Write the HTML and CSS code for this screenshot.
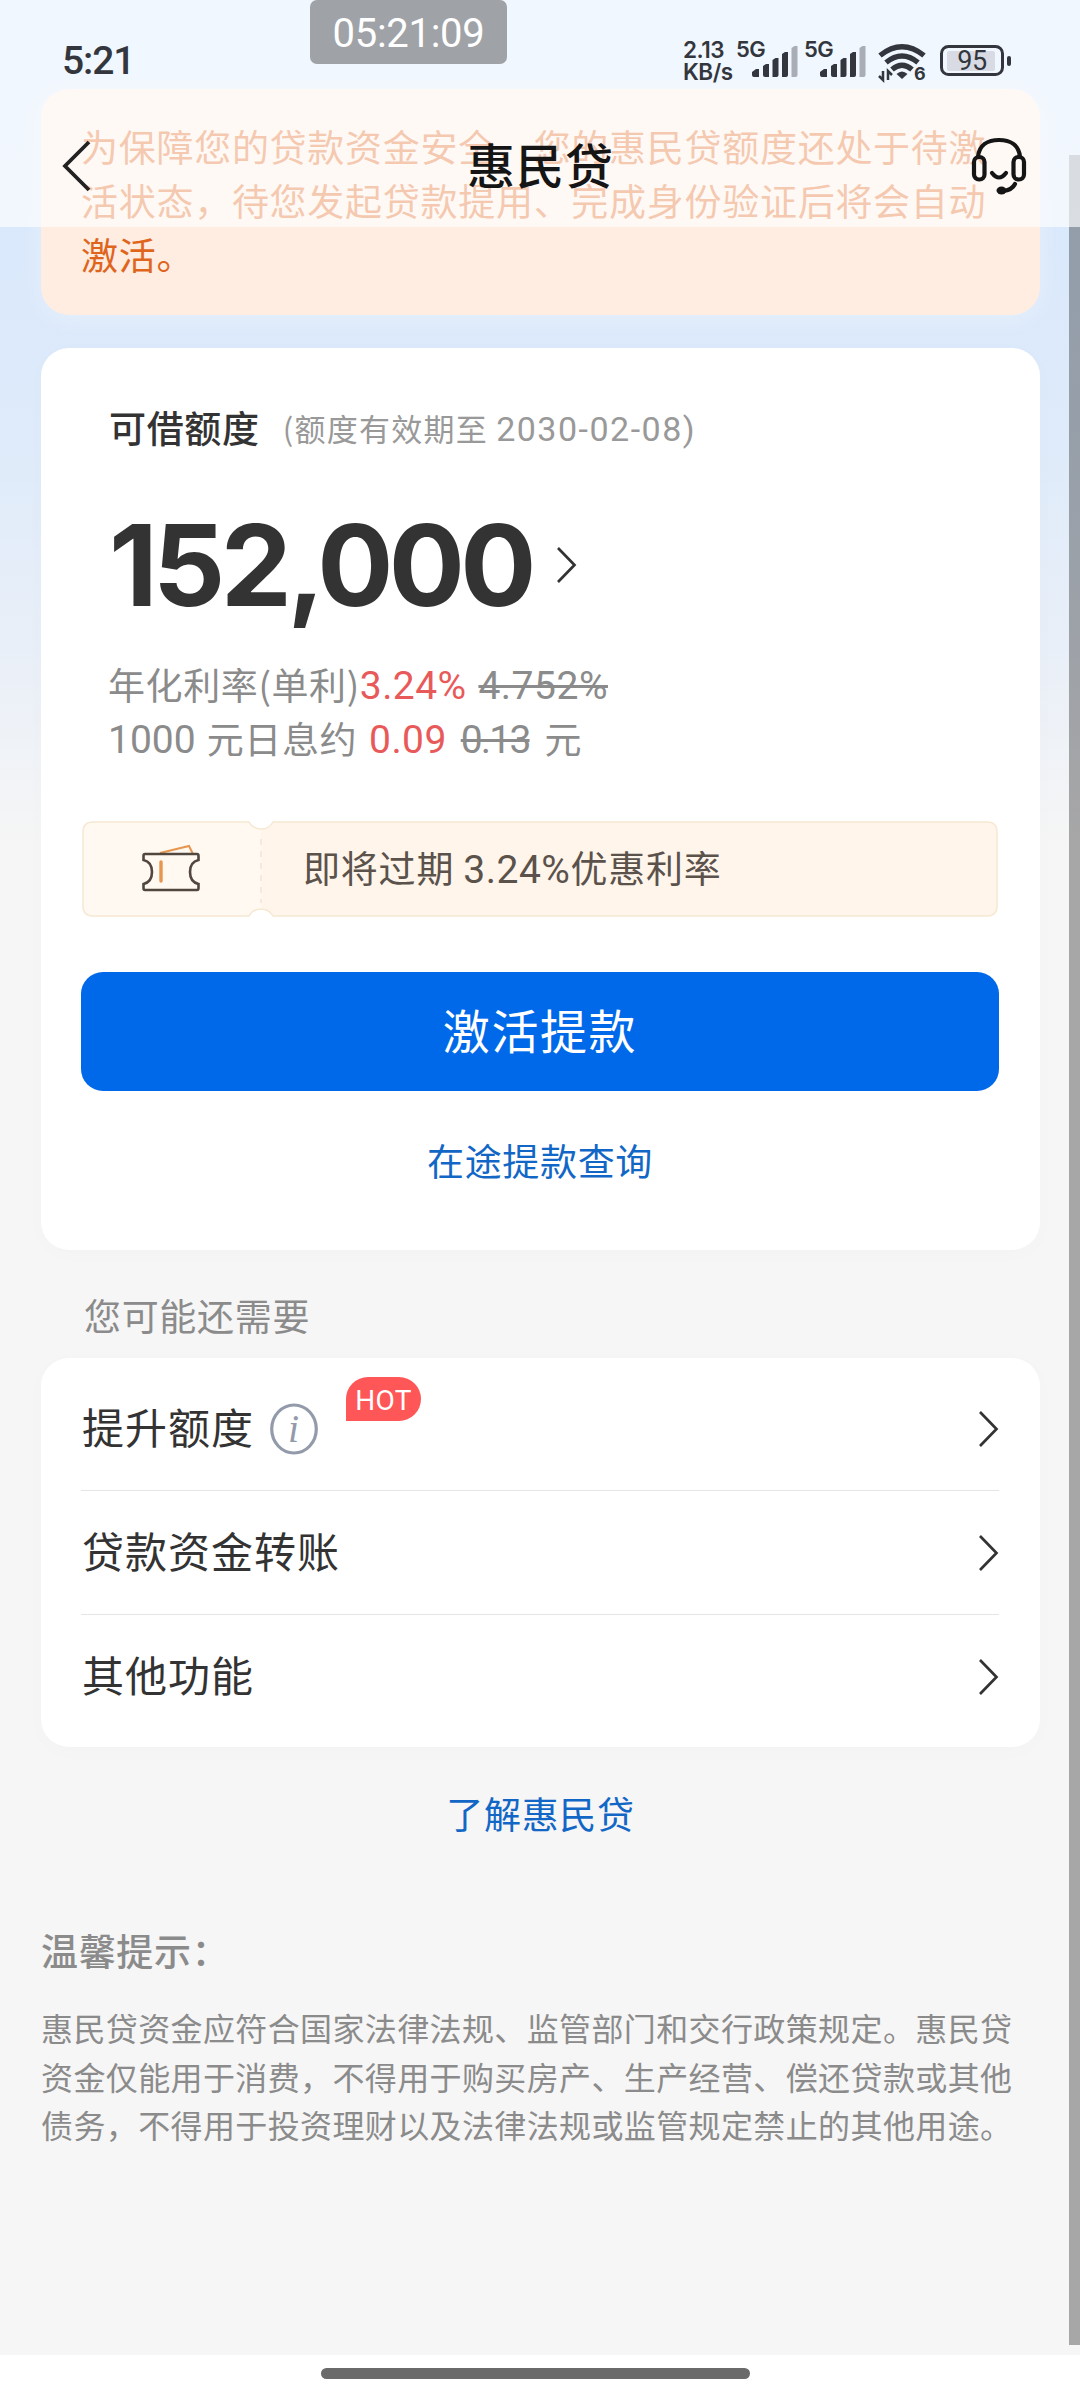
FILE: index.html
```html
<!DOCTYPE html>
<html lang="zh-CN">
<head>
<meta charset="utf-8">
<title>惠民贷</title>
<link rel="stylesheet" href="styles.css">
</head>
<body>
<div class="screen">
  <header class="top">
    <div class="status">
      <span class="clock">5:21</span>
      <div class="status-icons">
        <span class="speed"><span>2.13</span><span>KB/s</span></span>
        <svg class="signal" width="62" height="46" viewBox="0 -4 62 46"><text x="0" y="17.500">5G</text><g fill="#33373d"><path d="M16 36v-3l4-3h3v8h-5q-2 0-2-2z"/><path d="M27 27l3-2h3v13h-4q-2 0-2-2z"/><path d="M36.500 21l3-2h3v17q0 2-2 2h-4z"/><path d="M46 15l3-2h3v23q0 2-2 2h-4z"/></g><path d="M55.500 9l3-2h3v29q0 2-2 2h-4z" fill="#a9adb6"/></svg>
        <svg class="signal" width="62" height="46" viewBox="0 -4 62 46"><text x="0" y="17.500">5G</text><g fill="#33373d"><path d="M16 36v-3l4-3h3v8h-5q-2 0-2-2z"/><path d="M27 27l3-2h3v13h-4q-2 0-2-2z"/><path d="M36.500 21l3-2h3v17q0 2-2 2h-4z"/><path d="M46 15l3-2h3v23q0 2-2 2h-4z"/></g><path d="M55.500 9l3-2h3v29q0 2-2 2h-4z" fill="#a9adb6"/></svg>
        <svg class="wifi" width="48" height="46" viewBox="0 0 48 46"><g fill="none" stroke="#33373d" stroke-width="5.400"><path d="M2 14.500Q24-3 46 14.500"/><path d="M8 21.500Q24 8.500 40 21.500"/><path d="M14 28.500Q24 20 34 28.500"/></g><path d="M18.500 33q5.500-5 11 0l-5.500 5z" fill="#33373d"/><path d="M5 30v9l-4-4M10 39v-9l4 4" fill="none" stroke="#33373d" stroke-width="2.500"/><text x="36" y="39">6</text></svg>
        <svg class="battery" width="72" height="32" viewBox="0 0 72 32"><rect x="1.500" y="1.500" width="61" height="28" rx="7" fill="none" stroke="#33373d" stroke-width="3"/><rect x="7" y="6" width="48" height="20" rx="2" fill="#d8dbe4"/><rect x="67" y="11" width="4" height="10" rx="2" fill="#33373d"/><text x="32" y="25" text-anchor="middle">95</text></svg>
      </div>
    </div>
    <div class="nav">
      <svg class="back" width="30" height="52" viewBox="0 0 30 52"><path d="M28 2L4 26L28 50" fill="none" stroke="#222" stroke-width="3.800"/></svg>
      <h1>惠民贷</h1>
      <svg class="service" width="56" height="58" viewBox="0 0 56 58"><g fill="none" stroke="#151515" stroke-width="4.200" stroke-linecap="round"><path d="M7 20C8 8 17 3 28 3s20 5 21 17"/><rect x="3" y="20" width="10.500" height="22.500" rx="5"/><rect x="42.500" y="20" width="10.500" height="22.500" rx="5"/><path d="M21 36q7 9 14 0M44 47q-3 6-12 7"/></g><ellipse cx="30.500" cy="53.500" rx="5" ry="4" fill="#151515"/></svg>
    </div>
  </header>
  <div class="timer">05:21:09</div>
  <div class="scrollbar"></div>

  <main>
    <section class="notice">为保障您的贷款资金安全，您的惠民贷额度还处于待激活状态，待您发起贷款提用、完成身份验证后将会自动激活。</section>

    <section class="card quota">
      <div class="quota-title"><b>可借额度</b><span>(额度有效期至 <i class="num">2030-02-08)</i></span></div>
      <div class="amount"><strong>152,000</strong><svg width="21" height="38" viewBox="0 0 21 38"><path d="M2 2L18.500 19L2 36" fill="none" stroke="#333" stroke-width="2.700"/></svg></div>
      <div class="rates">
        <p class="r1"><span>年化利率(单利)</span><em>3.24%</em><del>4.752%</del></p>
        <p class="r2"><i class="num">1000</i><span class="day">元日息约</span><em>0.09</em><del>0.13</del><span>元</span></p>
      </div>
      <div class="coupon">
        <svg class="coupon-bg" width="917" height="96" viewBox="0 0 917 96"><path d="M11 1H167Q170 8 179 8V88Q170 88 167 95H11Q1 95 1 85V11Q1 1 11 1Z" fill="#fff9f2"/><path d="M179 8Q188 8 191 1H905Q915 1 915 11V85Q915 95 905 95H191Q188 88 179 88Z" fill="#fff5eb"/><path d="M11 1H167Q171 8 179 8T191 1H905Q915 1 915 11V85Q915 95 905 95H191Q187 88 179 88T167 95H11Q1 95 1 85V11Q1 1 11 1Z" fill="none" stroke="#f6e8d2" stroke-width="1.500"/><path d="M179 18V82" stroke="#f5e9dd" stroke-width="2" stroke-dasharray="6 6"/></svg>
        <svg class="ticket" width="58" height="48" viewBox="0 0 58 48"><path d="M18 9L47 2L51 10" fill="none" stroke="#e6964f" stroke-width="2"/><path d="M3 10H55Q56.500 10 56.500 12V16Q48 18 48 28T56.500 40V44Q56.500 46 55 46H3Q1.500 46 1.500 44V40Q10 38 10 28T1.500 16V12Q1.500 10 3 10Z" fill="none" stroke="#51473f" stroke-width="2.600"/><path d="M19 18V37" stroke="#e6964f" stroke-width="3.400" stroke-linecap="round"/></svg>
        <p>即将过期 <i class="num">3.24%</i>优惠利率</p>
      </div>
      <button class="primary">激活提款</button>
      <a class="link">在途提款查询</a>
    </section>

    <h2>您可能还需要</h2>
    <section class="card list">
      <div class="row"><span>提升额度</span><svg class="info" width="48" height="52" viewBox="0 0 48 52"><ellipse cx="24" cy="26" rx="22.300" ry="24" fill="none" stroke="#939bab" stroke-width="3.200"/><text x="24" y="39" text-anchor="middle">i</text></svg><span class="hot">HOT</span><svg class="go" width="21" height="38" viewBox="0 0 21 38"><path d="M2 2L18.500 19L2 36" fill="none" stroke="#333" stroke-width="2.700"/></svg></div>
      <div class="row"><span>贷款资金转账</span><svg class="go" width="21" height="38" viewBox="0 0 21 38"><path d="M2 2L18.500 19L2 36" fill="none" stroke="#333" stroke-width="2.700"/></svg></div>
      <div class="row"><span>其他功能</span><svg class="go" width="21" height="38" viewBox="0 0 21 38"><path d="M2 2L18.500 19L2 36" fill="none" stroke="#333" stroke-width="2.700"/></svg></div>
    </section>
    <a class="link about">了解惠民贷</a>
    <section class="tips">
      <h3>温馨提示：</h3>
      <p>惠民贷资金应符合国家法律法规、监管部门和交行政策规定。惠民贷<br>资金仅能用于消费，不得用于购买房产、生产经营、偿还贷款或其他<br>债务，不得用于投资理财以及法律法规或监管规定禁止的其他用途。</p>
    </section>
  </main>
  <footer><span class="home"></span></footer>
</div>
</body>
</html>
```
FILE: styles.css
```css
* { box-sizing: border-box; margin: 0; padding: 0; }
body { background: #fff; color: #333; }
.screen { position: relative; width: 1080px; height: 2400px; overflow: hidden; display: flex; flex-direction: column; font-family: "Noto Sans CJK SC", sans-serif; }
main { flex: 1; padding: 89px 40px 0 41px; background: #f6f6f6 linear-gradient(#d6e7fd 0, #dbe9fb 300px, #dfebfa 450px, #e9eff8 650px, #f6f6f6 850px) no-repeat 0 0 / 100% 850px; }
i { font-style: normal; }
.num { font-family: Roboto, sans-serif; }

/* translucent bar over the scrolled page */
.top { position: absolute; z-index: 3; left: 0; top: 0; width: 1080px; height: 227px; background: rgba(255, 255, 255, .65); }
.status { height: 104px; padding: 38px 68px 0 62px; display: flex; justify-content: space-between; align-items: flex-start; }
.clock { font: 500 39px/46px Roboto, sans-serif; letter-spacing: -1.100px; color: #33373d; }
.status-icons { display: flex; align-items: flex-start; color: #33373d; font-family: Inter, sans-serif; }
.speed { display: flex; flex-direction: column; width: 53px; margin-top: 1px; font: 600 22.500px/21.500px Inter, sans-serif; letter-spacing: -.5px; }
.status-icons text { font: 600 22px Inter, sans-serif; letter-spacing: -.5px; fill: #33373d; }
.signal { margin: -3px 6px 0 0; }
.wifi { margin: 3px 14px 0 6px; }
.status-icons .wifi text { font-size: 18px; font-weight: 700; }
.battery { margin-top: 7px; }
.status-icons .battery text { font: 400 27px Roboto, sans-serif; letter-spacing: -.5px; }
.nav { display: flex; align-items: center; justify-content: space-between; padding: 0 53px 0 61px; height: 124px; }
.nav h1 { padding-bottom: 6px; margin-left: 19px; font: 500 48px/60px "Noto Sans CJK SC", sans-serif; letter-spacing: 1px; color: #151515; }

.timer { position: absolute; z-index: 4; left: 310px; top: 0; width: 197px; height: 64px; border-radius: 7px; background: #9fa3a7; color: #fff; font: 400 40px/67px Roboto, sans-serif; letter-spacing: -.3px; text-align: center; }
.scrollbar { position: absolute; z-index: 2; right: 0; top: 155px; width: 11px; height: 2190px; background: rgba(0, 0, 0, .32); }

.notice { height: 226px; padding: 30px 42px 0 40px; border-radius: 28px; background: #ffede2; box-shadow: 0 4px 24px rgba(255, 255, 255, .35); color: #e0651c; font-size: 37px; line-height: 54px; letter-spacing: .720px; word-break: break-all; }
.card { background: #fff; border-radius: 28px; box-shadow: 0 4px 24px rgba(0, 0, 0, .015); }
.quota { height: 902px; margin-top: 33px; padding: 52px 41px 0 40px; }
.quota-title { display: flex; align-items: center; gap: 23px; height: 54px; padding-left: 28px; }
.quota-title b { font-size: 37px; font-weight: 500; letter-spacing: .680px; }
.quota-title span { padding-top: 1px; font-size: 31px; letter-spacing: 1.250px; color: #999; white-space: nowrap; }
.quota-title .num { font-size: 34px; letter-spacing: 1.500px; }
.amount { display: flex; align-items: center; gap: 24px; height: 120px; margin-top: 51px; padding-left: 28px; }
.amount strong { font: 700 113px/120px Inter, sans-serif; letter-spacing: -4.600px; }
.rates { margin-top: 32px; padding-left: 27px; color: #8b8b8b; font-size: 37px; line-height: 54px; letter-spacing: .600px; white-space: nowrap; }
.rates p { display: flex; height: 54px; }
.rates em, .rates del, .rates .num { font: 400 39px/58px Roboto, sans-serif; letter-spacing: 0; }
.rates em { color: #e85a5a; letter-spacing: .400px; }
.r1 del { margin-left: 12px; letter-spacing: .500px; }
.r2 .day { margin: 0 12px 0 11px; }
.rates .r2 del { margin: 0 15px 0 14px; letter-spacing: -1.800px; }
.coupon { position: relative; display: flex; align-items: center; width: 917px; height: 96px; margin: 56px 0 0 1px; padding-left: 60px; }
.coupon-bg { position: absolute; left: 0; top: 0; }
.ticket { position: relative; margin: 0 103px 2px 0; }
.coupon p { position: relative; padding-bottom: 5px; font-size: 37px; letter-spacing: .800px; color: #5b524c; }
.coupon .num { font-size: 39px; letter-spacing: .5px; }
.primary { display: block; width: 918px; height: 119px; margin-top: 55px; padding-bottom: 5px; border: 0; border-radius: 22px; background: #0069e9; color: #fff; font: 400 47px/114px "Noto Sans CJK SC", sans-serif; letter-spacing: 1.600px; }
.link { display: block; margin-top: 42px; text-align: center; font-size: 37px; line-height: 54px; letter-spacing: .680px; color: #1267c6; }
h2 { margin: 38px 0 0 43px; font-size: 37px; font-weight: 400; line-height: 54px; letter-spacing: .680px; color: #8b8b8b; }
.list { height: 389px; margin-top: 16px; padding: 9px 41px 0 40px; }
.row { display: flex; align-items: center; height: 124px; border-bottom: 1px solid #e5e5e5; font-size: 42px; letter-spacing: 1px; }
.row > span:first-child { padding: 0 0 7px 1px; }
.row:last-child { border: 0; }
.row .go { margin-left: auto; }
.info { margin-left: 16px; }
.info text { font: italic 40px "Liberation Serif", serif; fill: #939bab; }
.hot { align-self: flex-start; width: 75px; height: 44px; margin: 10px 0 0 28px; border-radius: 22px 22px 22px 0; background: #ff5757; color: #fff; font: 400 28px/47px Roboto, sans-serif; letter-spacing: .3px; text-align: center; }
.about { margin-top: 39px; }
.tips { margin-top: 83px; color: #8b8b8b; }
.tips h3 { font-size: 37px; font-weight: 500; line-height: 54px; letter-spacing: .680px; }
.tips p { margin-top: 26px; font-size: 32px; line-height: 48.700px; letter-spacing: .380px; white-space: nowrap; }
footer { height: 45px; background: #fff; display: flex; justify-content: center; padding-top: 13px; }
.home { width: 429px; height: 11px; margin-right: 9px; border-radius: 6px; background: #6a6a6a; }
```
